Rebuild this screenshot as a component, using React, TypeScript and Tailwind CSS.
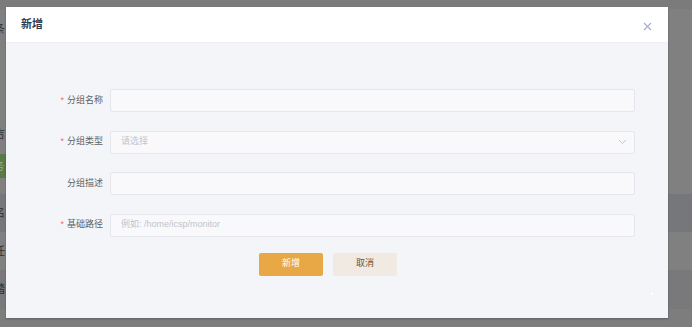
import React from 'react';

const font = { fontFamily: '"Liberation Sans", "Noto Sans CJK SC", sans-serif' };

function Field({ label, required, placeholder, select }: { label: string; required?: boolean; placeholder?: string; select?: boolean }) {
    return (
        <div className="flex items-center h-[23px]">
            <label className="w-[104px] pr-[7px] flex justify-end items-center text-[9px] text-[#606266]">
                {required && <span className="text-[#f56c6c] mr-[3px] text-[9px]">*</span>}
                {label}
            </label>
            <div className="relative flex items-center w-[525px] h-[23px] bg-[#f9f9fb] border border-[#e4e6ec] rounded-[2px] px-[10px]">
                <span className="text-[9px] text-[#c0c4cc]">{placeholder}</span>
                {select && (
                    <svg className="absolute right-[7px] top-1/2 -translate-y-1/2" width="9" height="6" viewBox="0 0 9 6">
                        <path d="M1 1l3.5 3.5L8 1" fill="none" stroke="#c0c4cc" strokeWidth="1" />
                    </svg>
                )}
            </div>
        </div>
    );
}

export default function App() {
    return (
        <div className="relative w-[692px] h-[327px] overflow-hidden bg-[#808080]" style={font}>
            {/* Page behind overlay */}
            <div className="flex flex-col h-full">
                <div className="h-[9px] bg-[#7b7b7b]" />
                <div className="h-[40px] flex items-center text-[11px] text-[#2e2e2e] -ml-[6px]">条</div>
                <div className="h-[65px]" />
                <div className="h-[40px] flex items-center text-[11px] text-[#2e2e2e] -ml-[6px]">吉</div>
                <div className="h-[24px] w-[8px] bg-[#5b7a4a] text-[10px] text-[#9ab08a] flex items-center -ml-[2px] pl-0">
                    <span className="-ml-[4px]">务</span>
                </div>
                <div className="h-[16px]" />
                <div className="h-[38px] bg-[#76777a] flex items-center text-[11px] text-[#2e2e2e] -ml-[6px]">名</div>
                <div className="h-[38px] flex items-center text-[11px] text-[#2e2e2e] -ml-[6px]">任</div>
                <div className="h-[39px] bg-[#79797b] flex items-center text-[11px] text-[#2e2e2e] -ml-[6px]">踏</div>
                <div className="flex-1 bg-[#7d7d7d]" />
            </div>

            {/* Dialog */}
            <div className="absolute left-[6px] top-[7px] w-[662px] h-[311px] bg-[#f4f5f9] shadow-[0_1px_2px_rgba(0,0,0,0.25)] flex flex-col">
                <div className="h-[36px] bg-white border-b border-[#eef0f4] flex items-center justify-between pl-[15px] pr-[16px]">
                    <span className="text-[11px] font-bold text-[#303a4c]">新增</span>
                    <svg width="9" height="9" viewBox="0 0 9 9" className="mt-[4px]">
                        <path d="M1 1l7 7M8 1l-7 7" stroke="#a4abdc" strokeWidth="1.1" />
                    </svg>
                </div>
                <div className="flex flex-col pt-[46px] gap-[18.5px]">
                    <Field label="分组名称" required />
                    <Field label="分组类型" required placeholder="请选择" select />
                    <Field label="分组描述" />
                    <Field label="基础路径" required placeholder="例如: /home/icsp/monitor" />
                </div>
                <div className="flex justify-center gap-[10px] mt-[16px] pr-[18px]">
                    <button className="w-[64px] h-[23px] bg-[#e8a845] text-white text-[9px] rounded-[2px]">新增</button>
                    <button className="w-[64px] h-[23px] bg-[#f0eae2] text-[#6e5234] text-[9px] rounded-[2px]">取消</button>
                </div>
                <div className="absolute left-[645px] top-[286px] w-[2px] h-[2px] bg-white" />
            </div>
        </div>
    );
}
